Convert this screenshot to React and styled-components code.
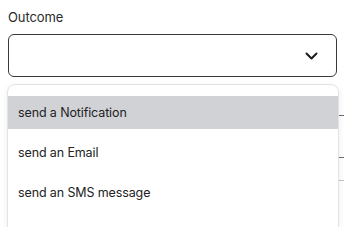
import React from "react";
import styled, { createGlobalStyle } from "styled-components";

const Global = createGlobalStyle`
  body {
    margin: 0;
    background: #fff;
    font-family: Inter, "Liberation Sans", sans-serif;
    color: #222;
  }
`;

const Wrapper = styled.div`
  position: relative;
  padding: 8px 7px 0 8px;
  height: 227px;
  box-sizing: border-box;
  overflow: hidden;
`;
const Label = styled.div`
  font-size: 13px;
  line-height: 18px;
  margin-bottom: 8px;
  letter-spacing: -0.1px;
  color: #2a2a2a;
`;
const SelectBox = styled.div`
  height: 43px;
  box-sizing: border-box;
  border: 1px solid #3a3a3a;
  border-radius: 6px;
  display: flex;
  align-items: center;
  justify-content: flex-end;
  padding-right: 18px;
`;
const Behind = styled.div`
  margin-top: 8px;
  margin-right: -7px;
  display: flex;
  flex-direction: column;
`;
const BehindRow = styled.div`
  height: ${({ h }) => h}px;
  border-bottom: 1px solid ${({ c }) => c};
`;
const FocusEdge = styled.div`
  height: 30px;
  margin-right: 5px;
  border-left: 1px solid #2b2bd0;
  border-right: 1px solid #2b2bd0;
`;
const Menu = styled.div`
  position: absolute;
  left: 7px;
  top: 84px;
  width: 332px;
  height: 160px;
  box-sizing: border-box;
  background: #fff;
  border: 1px solid #e4e4e7;
  border-radius: 8px;
  box-shadow: 0 2px 6px rgba(0, 0, 0, 0.08);
  padding-top: 11px;
  display: flex;
  flex-direction: column;
  gap: 7px;
`;
const Item = styled.div`
  height: 33px;
  display: flex;
  align-items: center;
  padding-left: 10px;
  font-size: 12.5px;
  letter-spacing: -0.12px;
  color: #222;
  background: ${({ active }) => (active ? "#d1d2d6" : "transparent")};
`;

function Chevron() {
  return (
    <svg width="13" height="8" viewBox="0 0 13 8">
      <path
        d="M1.5 1.5 L6.5 6.5 L11.5 1.5"
        fill="none"
        stroke="#1c1c1c"
        strokeWidth="2"
        strokeLinecap="round"
        strokeLinejoin="round"
      />
    </svg>
  );
}

export default function App() {
  const items = ["send a Notification", "send an Email", "send an SMS message"];
  return (
    <Wrapper>
      <Global />
      <Label>Outcome</Label>
      <SelectBox>
        <Chevron />
      </SelectBox>
      <Behind>
        <BehindRow h={30} c="#6b6b6b" />
        <BehindRow h={41} c="#6b6b6b" />
        <BehindRow h={22} c="#c4c4c4" />
        <FocusEdge />
      </Behind>
      <Menu>
        {items.map((t, i) => (
          <Item key={t} active={i === 0}>
            {t}
          </Item>
        ))}
      </Menu>
    </Wrapper>
  );
}
